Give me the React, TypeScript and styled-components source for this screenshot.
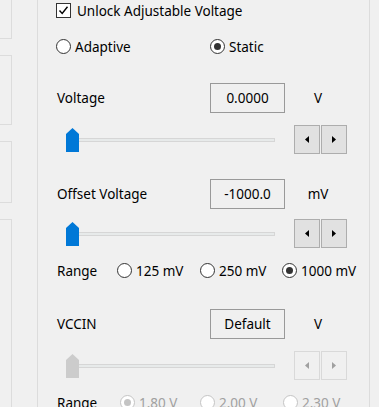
import React from 'react'
import styled, { createGlobalStyle } from 'styled-components'

const GlobalStyle = createGlobalStyle`
  html, body {
    margin: 0;
    padding: 0;
    background: #f0f0f0;
  }
  body {
    font-family: 'Noto Sans', 'Open Sans', sans-serif;
    font-size: 13.5px;
    color: #000;
  }
`

const Page = styled.div`
  display: flex;
  width: 379px;
  height: 407px;
  overflow: hidden;
  background: #f0f0f0;
`

const SideStrip = styled.div`
  display: flex;
  flex-direction: column;
  gap: 16px;
  width: 37px;
  flex-shrink: 0;
`

const SideBox = styled.div<{ $h: number; $first?: boolean }>`
  width: 13px;
  height: ${({ $h }) => $h}px;
  margin-left: -1px;
  margin-top: ${({ $first }) => ($first ? '-1px' : '0')};
  border: 1px solid #dcdcdc;
  box-sizing: border-box;
  flex-shrink: 0;
`

const Panel = styled.div`
  display: flex;
  flex-direction: column;
  width: 333px;
  flex-shrink: 0;
  box-sizing: border-box;
  border-left: 1px solid #dcdcdc;
  border-right: 1px solid #dcdcdc;
  padding-left: 18px;
`

const Row = styled.div<{ $mt: number; $h: number }>`
  display: flex;
  align-items: center;
  margin-top: ${({ $mt }) => $mt}px;
  height: ${({ $h }) => $h}px;
  flex-shrink: 0;
  white-space: nowrap;
`

const CheckBox = styled.span`
  display: inline-flex;
  align-items: center;
  justify-content: center;
  width: 15px;
  height: 15px;
  box-sizing: border-box;
  border: 1px solid #333;
  background: #fff;
  margin-right: 6px;
`

const Option = styled.div<{ $w?: number; $disabled?: boolean }>`
  display: flex;
  align-items: center;
  width: ${({ $w }) => ($w ? `${$w}px` : 'auto')};
  color: ${({ $disabled }) => ($disabled ? '#a0a0a0' : '#000')};
`

const RadioCircle = styled.span<{ $checked?: boolean; $disabled?: boolean }>`
  display: inline-flex;
  align-items: center;
  justify-content: center;
  width: 15px;
  height: 15px;
  box-sizing: border-box;
  border-radius: 50%;
  border: 1px solid ${({ $disabled }) => ($disabled ? '#c4c4c4' : '#333')};
  background: #fff;
  margin-right: 4px;
  &::after {
    content: '';
    display: ${({ $checked }) => ($checked ? 'block' : 'none')};
    width: 7px;
    height: 7px;
    border-radius: 50%;
    background: ${({ $disabled }) => ($disabled ? '#c4c4c4' : '#333')};
  }
`

const Label = styled.div<{ $w: number }>`
  width: ${({ $w }) => $w}px;
  flex-shrink: 0;
  padding-left: 1px;
  box-sizing: border-box;
`

const ValueBox = styled.div`
  width: 75px;
  height: 30px;
  box-sizing: border-box;
  border: 1px solid #999;
  display: flex;
  align-items: center;
  justify-content: center;
  background: #f0f0f0;
`

const Unit = styled.div`
  width: 66px;
  text-align: center;
`

const SliderTrack = styled.div`
  position: relative;
  width: 209px;
  height: 100%;
  margin-left: 10px;
  display: flex;
  align-items: center;
  &::before {
    content: '';
    display: block;
    width: 100%;
    height: 4px;
    box-sizing: border-box;
    border: 1px solid #d6d6d6;
    background: #e7eaea;
  }
`

const Thumb = styled.svg`
  position: absolute;
  left: 0;
  top: 50%;
  margin-top: -12px;
`

const SpinGroup = styled.div`
  display: flex;
  margin-left: 19px;
  height: 29px;
`

const SpinButton = styled.div<{ $disabled?: boolean }>`
  width: 26px;
  height: 29px;
  box-sizing: border-box;
  border: 1px solid ${({ $disabled }) => ($disabled ? '#d9d9d9' : '#adadad')};
  background: ${({ $disabled }) => ($disabled ? '#f0f0f0' : '#e1e1e1')};
  display: flex;
  align-items: center;
  justify-content: center;
  & + & {
    margin-left: 1px;
  }
`

function Arrow({ dir, disabled }: { dir: 'left' | 'right'; disabled?: boolean }) {
  const fill = disabled ? '#a0a0a0' : '#000'
  return (
    <svg width="4" height="7" viewBox="0 0 4 7">
      {dir === 'left' ? <polygon points="4,0 4,7 0,3.5" fill={fill} /> : <polygon points="0,0 0,7 4,3.5" fill={fill} />}
    </svg>
  )
}

function Slider({ mt, disabled }: { mt: number; disabled?: boolean }) {
  return (
    <Row $mt={mt} $h={29}>
      <SliderTrack>
        <Thumb width="13" height="24" viewBox="0 0 13 24">
          <polygon points="6.5,0 13,6 13,24 0,24 0,6" fill={disabled ? '#cccccc' : '#0078d7'} />
        </Thumb>
      </SliderTrack>
      <SpinGroup>
        <SpinButton $disabled={disabled}>
          <Arrow dir="left" disabled={disabled} />
        </SpinButton>
        <SpinButton $disabled={disabled}>
          <Arrow dir="right" disabled={disabled} />
        </SpinButton>
      </SpinGroup>
    </Row>
  )
}

function Radio({ label, checked, disabled, w }: { label: string; checked?: boolean; disabled?: boolean; w?: number }) {
  return (
    <Option $w={w} $disabled={disabled}>
      <RadioCircle $checked={checked} $disabled={disabled} />
      {label}
    </Option>
  )
}

export default function App() {
  return (
    <>
      <GlobalStyle />
      <Page>
        <SideStrip>
          <SideBox $h={40} $first />
          <SideBox $h={70} />
          <SideBox $h={62} />
          <SideBox $h={220} />
        </SideStrip>
        <Panel>
          <Row $mt={3} $h={15}>
            <CheckBox>
              <svg width="11" height="11" viewBox="0 0 11 11">
                <polyline points="1.5,5.5 4.2,8.5 9.5,1.8" fill="none" stroke="#000" strokeWidth="1.4" />
              </svg>
            </CheckBox>
            Unlock Adjustable Voltage
          </Row>
          <Row $mt={21} $h={15}>
            <Radio label="Adaptive" w={154} />
            <Radio label="Static" checked />
          </Row>

          <Row $mt={29} $h={30}>
            <Label $w={154}>Voltage</Label>
            <ValueBox>0.0000</ValueBox>
            <Unit>V</Unit>
          </Row>
          <Slider mt={12} />

          <Row $mt={25} $h={30}>
            <Label $w={154}>Offset Voltage</Label>
            <ValueBox>-1000.0</ValueBox>
            <Unit>mV</Unit>
          </Row>
          <Slider mt={10} />

          <Row $mt={15} $h={15}>
            <Label $w={61}>Range</Label>
            <Radio label="125 mV" w={83} />
            <Radio label="250 mV" w={82} />
            <Radio label="1000 mV" checked />
          </Row>

          <Row $mt={31} $h={30}>
            <Label $w={154}>VCCIN</Label>
            <ValueBox>Default</ValueBox>
            <Unit>V</Unit>
          </Row>
          <Slider mt={12} disabled />

          <Row $mt={15} $h={15}>
            <Label $w={64}>Range</Label>
            <Radio label="1.80 V" w={80} checked disabled />
            <Radio label="2.00 V" w={83} disabled />
            <Radio label="2.30 V" disabled />
          </Row>
        </Panel>
      </Page>
    </>
  )
}
